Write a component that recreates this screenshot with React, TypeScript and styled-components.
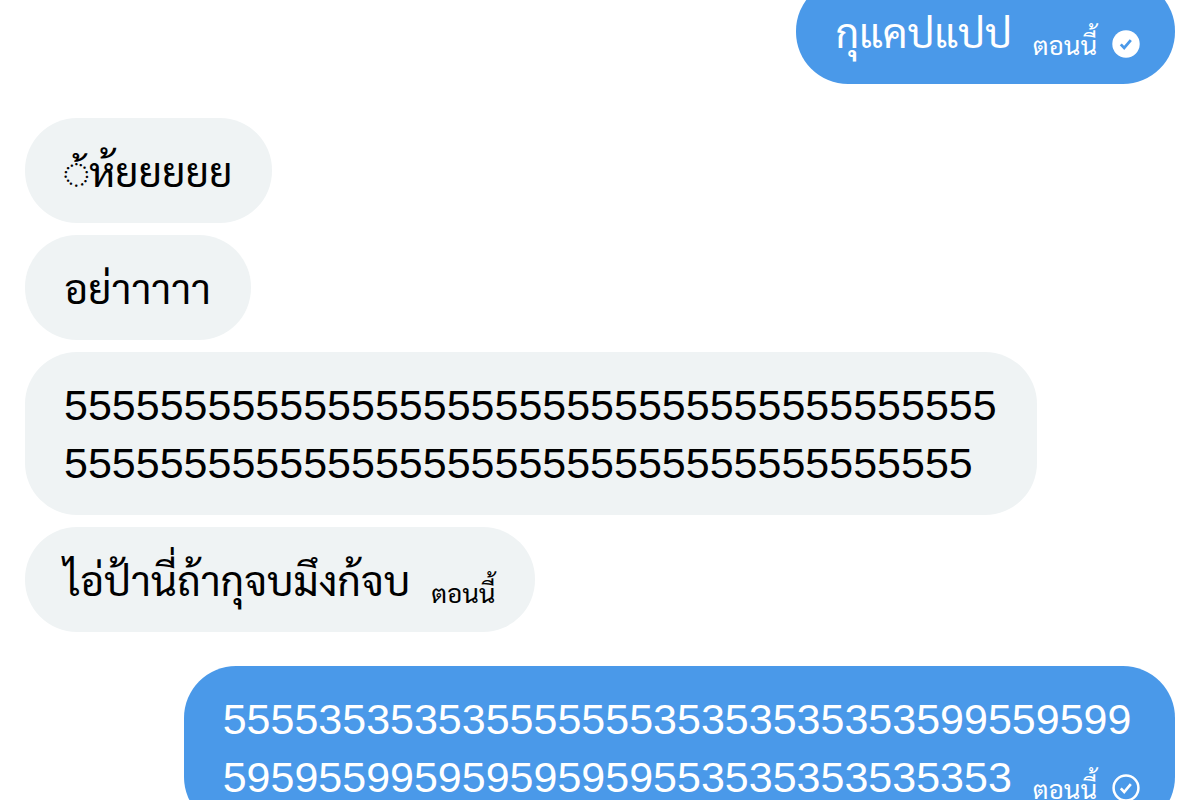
import React from "react";
import styled, { createGlobalStyle } from "styled-components";

const GlobalStyle = createGlobalStyle`
  *, *::before, *::after { box-sizing: border-box; }
  body {
    margin: 0;
    background: #ffffff;
    font-family: "Liberation Sans", Sarabun, monospace;
  }
`;

const Viewport = styled.main`
  height: 100vh;
  overflow: hidden;
`;

const Thread = styled.ol`
  display: flex;
  flex-direction: column;
  gap: 34px;
  margin: -21px 0 0;
  padding: 0 25px;
  list-style: none;
`;

const Group = styled.li<{ $own?: boolean }>`
  display: flex;
  flex-direction: column;
  align-items: ${(p) => (p.$own ? "flex-end" : "flex-start")};
  gap: 12px;
`;

const Bubble = styled.p<{ $own?: boolean; $thai?: boolean }>`
  margin: 0;
  padding: ${(p) => (p.$thai ? "26px" : "24px")} ${(p) => (p.$own ? "35px" : "40px")}
    ${(p) => (p.$thai ? "21px" : "23px")} 39px;
  border-radius: 52px;
  background: ${(p) => (p.$own ? "#4a99e9" : "#eff3f4")};
  color: ${(p) => (p.$own ? "#ffffff" : "#000000")};
  font-size: ${(p) => (p.$thai ? "41px" : "43px")};
  line-height: 58px;
  white-space: nowrap;
`;

const Meta = styled.span`
  display: inline-flex;
  align-items: center;
  gap: 15px;
  height: 28px;
  margin-left: 21px;
  vertical-align: -7px;
  font-size: 26px;
  line-height: 28px;
`;

const Icon = styled.svg`
  width: 28px;
  height: 28px;
  margin-top: -4px;
`;

const Read = () => (
  <Icon viewBox="0 0 28 28" role="img" aria-label="อ่านแล้ว">
    <circle cx="14" cy="14" r="13.7" fill="#fff" />
    <path d="M8.8 14.4l3.4 3.6 6.6-7.8" fill="none" stroke="#4a99e9" strokeWidth="2.8" />
  </Icon>
);

const Sent = () => (
  <Icon viewBox="0 0 28 28" role="img" aria-label="ส่งแล้ว">
    <circle cx="14" cy="14" r="12.4" fill="none" stroke="#fff" strokeWidth="2.5" />
    <path d="M8.8 14.4l3.4 3.6 6.6-7.8" fill="none" stroke="#fff" strokeWidth="2.6" />
  </Icon>
);

export default function App() {
  return (
    <>
      <GlobalStyle />
      <Viewport>
        <Thread>
          <Group $own>
            <Bubble $own $thai>
              กุแคปแปป
              <Meta>
                <time>ตอนนี้</time>
                <Read />
              </Meta>
            </Bubble>
          </Group>
          <Group>
            <Bubble $thai>{"\u25cc\u0e49ห้ยยยยย"}</Bubble>
            <Bubble $thai>อย่าาาาา</Bubble>
            <Bubble>
              {"5".repeat(39)}
              <br />
              {"5".repeat(38)}
            </Bubble>
            <Bubble $thai>
              ไอ่ป้านี่ถ้ากุจบมึงก้จบ
              <Meta>
                <time>ตอนนี้</time>
              </Meta>
            </Bubble>
          </Group>
          <Group $own>
            <Bubble $own>
              55553535353555555535353535353599559599
              <br />
              595955995959595959553535353535353
              <Meta>
                <time>ตอนนี้</time>
                <Sent />
              </Meta>
            </Bubble>
          </Group>
        </Thread>
      </Viewport>
    </>
  );
}
